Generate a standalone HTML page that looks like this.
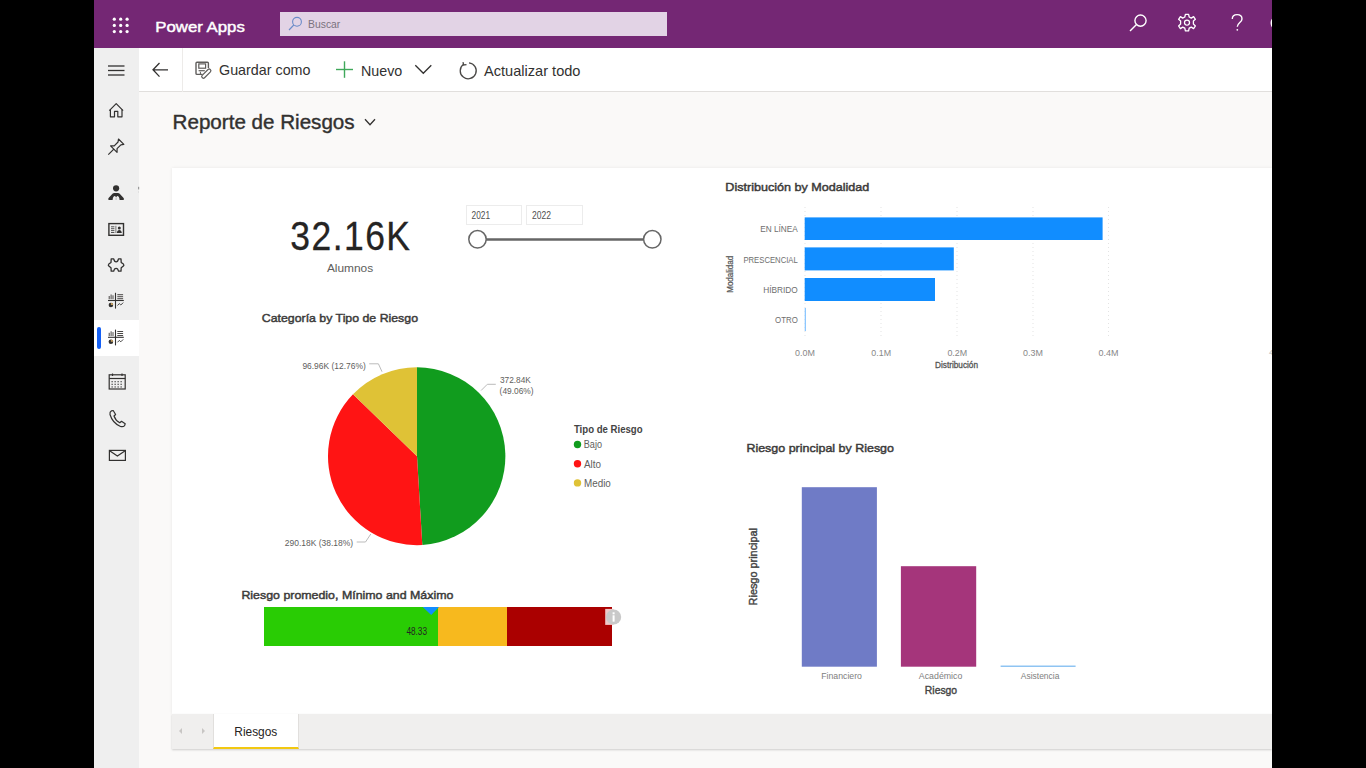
<!DOCTYPE html>
<html><head><meta charset="utf-8">
<title>Reporte de Riesgos</title>
<style>
*{margin:0;padding:0;box-sizing:border-box}
html,body{width:1366px;height:768px;overflow:hidden;background:#000}
body{position:relative;font-family:"Liberation Sans",sans-serif}
.blk{position:absolute}
#app{left:94px;top:0;width:1178px;height:768px;background:#faf9f8;overflow:hidden}
#topbar{left:94px;top:0;width:1178px;height:48px;background:#742774}
#search{left:280px;top:11.5px;width:387px;height:24.5px;background:#e2d3e5}
#toolbar{left:139px;top:48px;width:1133px;height:44px;background:#fff;border-bottom:1px solid #e1dfdd}
#rail{left:94px;top:48px;width:45px;height:720px;background:#efefef}
#railsel{left:94px;top:319.5px;width:45px;height:36px;background:#fff}
#railind{left:97px;top:327px;width:4px;height:21.5px;background:#1460f5;border-radius:2px}
#canvas{left:172px;top:168px;width:1100px;height:546px;background:#fff;box-shadow:0 0 3px rgba(0,0,0,.08)}
#tabs{left:172px;top:714px;width:1100px;height:35px;background:#f0efee;box-shadow:0 1px 2px rgba(0,0,0,.18)}
#tab{left:213px;top:714px;width:86px;height:35px;background:#fff;border-bottom:2.5px solid #f2c811;border-left:1px solid #e1dfdd;border-right:1px solid #e1dfdd}
svg{position:absolute;left:0;top:0}
text{font-family:"Liberation Sans",sans-serif}
</style></head><body>
<div class="blk" id="app"></div>
<div class="blk" id="topbar"></div>
<div class="blk" id="search"></div>
<div class="blk" id="rail"></div>
<div class="blk" id="railsel"></div>
<div class="blk" id="railind"></div>
<div class="blk" id="toolbar"></div>
<div class="blk" id="canvas"></div>
<div class="blk" id="tabs"></div>
<div class="blk" id="tab"></div>
<svg width="1366" height="768" viewBox="0 0 1366 768">
  <!-- ===== TOP BAR ===== -->
  <g fill="#fff">
    <circle cx="114.3" cy="19.2" r="1.6"/><circle cx="120.7" cy="19.2" r="1.6"/><circle cx="127.1" cy="19.2" r="1.6"/>
    <circle cx="114.3" cy="25.4" r="1.6"/><circle cx="120.7" cy="25.4" r="1.6"/><circle cx="127.1" cy="25.4" r="1.6"/>
    <circle cx="114.3" cy="31.6" r="1.6"/><circle cx="120.7" cy="31.6" r="1.6"/><circle cx="127.1" cy="31.6" r="1.6"/>
  </g>
  <text x="155.3" y="31.9" font-size="15.3" fill="#fff" stroke="#fff" stroke-width="0.45" textLength="89.5" lengthAdjust="spacingAndGlyphs">Power Apps</text>
  <g stroke="#6a8bc8" stroke-width="1.1" fill="none">
    <circle cx="297" cy="21.8" r="4.4"/><line x1="293.8" y1="25" x2="289" y2="30"/>
  </g>
  <text x="308" y="27.9" font-size="11.6" fill="#7a727e" textLength="32.3" lengthAdjust="spacingAndGlyphs">Buscar</text>
  <!-- right icons -->
  <g stroke="#fff" stroke-width="1.4" fill="none">
    <circle cx="1140.5" cy="20.6" r="5.6"/><line x1="1136.5" y1="24.6" x2="1130" y2="31"/>
  </g>
  <g transform="translate(1187,22.6)" stroke="#fff" stroke-width="1.3" fill="none">
    <path d="M-1.6,-8.2 L1.6,-8.2 L2.2,-5.6 L4.3,-4.5 L6.6,-6 L8.4,-3.3 L6.4,-1.5 L6.4,1.5 L8.4,3.3 L6.6,6 L4.3,4.5 L2.2,5.6 L1.6,8.2 L-1.6,8.2 L-2.2,5.6 L-4.3,4.5 L-6.6,6 L-8.4,3.3 L-6.4,1.5 L-6.4,-1.5 L-8.4,-3.3 L-6.6,-6 L-4.3,-4.5 L-2.2,-5.6 Z" stroke-linejoin="round"/>
    <circle cx="0" cy="0" r="2.5"/>
  </g>
  <g stroke="#fff" stroke-width="1.4" fill="none">
    <path d="M1232.3,19 C1232.3,15.6 1234.6,14.6 1237.1,14.6 C1240,14.6 1242,16.4 1242,19 C1242,22.3 1237.3,23 1237.3,26.8"/>
  </g>
  <circle cx="1237.3" cy="29.8" r="0.9" fill="#fff"/>
  <circle cx="1277.8" cy="23" r="6.5" stroke="#fff" stroke-width="1.5" fill="none"/>

  <!-- ===== TOOLBAR ===== -->
  <line x1="182.5" y1="48" x2="182.5" y2="92" stroke="#edebe9" stroke-width="1"/>
  <g stroke="#323130" stroke-width="1.3" fill="none">
    <line x1="108" y1="66" x2="124.5" y2="66"/><line x1="108" y1="70.5" x2="124.5" y2="70.5"/><line x1="108" y1="75" x2="124.5" y2="75"/>
    <path d="M159.5,63 L153,69.8 L159.5,76.6 M153,69.8 L168,69.8"/>
  </g>
  <!-- save as icon -->
  <g stroke="#5f5d5b" stroke-width="1.4" fill="none">
    <path d="M202.5,74.4 L197,74.4 Q196,74.4 196,73.4 L196,63.2 Q196,62.2 197,62.2 L207.4,62.2 Q208.4,62.2 208.4,63.2 L208.4,68"/>
    <rect x="198.8" y="63.9" width="6.8" height="4.3" stroke-width="1.2"/>
    <path d="M198.6,70.7 L204.8,70.7" stroke-width="1.2"/>
    <path d="M200.4,71.8 L200.4,74" stroke-width="1"/>
  </g>
  <g transform="translate(206.4,73.5) rotate(-45)">
    <rect x="-5.8" y="-1.7" width="11.3" height="3.4" rx="1.5" fill="#fff" stroke="#5f5d5b" stroke-width="1.2"/>
  </g>
  <text x="219" y="75.3" font-size="14.6" fill="#323130" textLength="91.5" lengthAdjust="spacingAndGlyphs">Guardar como</text>
  <g stroke="#3fa85a" stroke-width="1.4">
    <line x1="336" y1="69.5" x2="353" y2="69.5"/><line x1="344.5" y1="61.3" x2="344.5" y2="77.8"/>
  </g>
  <text x="361" y="75.5" font-size="15.1" fill="#323130" textLength="41.3" lengthAdjust="spacingAndGlyphs">Nuevo</text>
  <path d="M415.3,65.3 L423.3,73.3 L431.3,65.3" stroke="#323130" stroke-width="1.3" fill="none"/>
  <g stroke="#4a4846" stroke-width="1.3" fill="none">
    <path d="M463.5,64.3 A8,8 0 1 0 469,62.8"/>
    <path d="M463,62.2 L463.6,65 L466.5,64.6"/>
  </g>
  <text x="484" y="76" font-size="14.6" fill="#323130" textLength="96.5" lengthAdjust="spacingAndGlyphs">Actualizar todo</text>

  <!-- ===== RAIL ICONS ===== -->
  <g stroke="#323130" stroke-width="1.2" fill="none" stroke-linejoin="round">
    <!-- home -->
    <path d="M109.3,110.6 L116.2,103.7 L123.1,110.6"/>
    <path d="M110.4,109.4 L110.4,116.8 L114.5,116.8 L114.5,111.4 L117.8,111.4 L117.8,116.8 L122,116.8 L122,109.4"/>
    <!-- pin -->
    <g transform="translate(114.8,148.1) rotate(45)">
      <path d="M-3.8,-9 L3.8,-9 L2,-6.6 L2,-1.2 L4.6,1.4 L-4.6,1.4 L-2,-1.2 L-2,-6.6 Z"/>
      <path d="M0,1.4 L0,9.2"/>
    </g>
  </g>
  <!-- id card -->
  <rect x="108.9" y="223.6" width="14.6" height="11.7" stroke="#323130" stroke-width="1.4" fill="none"/>
  <!-- person -->
  <circle cx="116.1" cy="188.3" r="3.1" fill="#323130"/>
  <path d="M108.2,199.5 Q108,198.7 108.8,197.8 L112.5,193.7 Q113.2,192.9 114.3,192.9 L117.9,192.9 Q119,192.9 119.7,193.7 L123.4,197.8 Q124.2,198.7 124,199.5 Q123.8,199.9 123,199.9 L119.6,199.9 Q119.3,196.3 117.2,196.1 L116.1,197.3 L115,196.1 Q112.9,196.3 112.6,199.9 L109.2,199.9 Q108.4,199.9 108.2,199.5 Z" fill="#323130"/>
  <path d="M116.1,197.6 L116.1,199.9" stroke="#b0b0b0" stroke-width="0.9"/>
  <g fill="#555">
    <rect x="111" y="226.3" width="3.4" height="1"/><rect x="111" y="228.2" width="3.4" height="1"/><rect x="111" y="230.1" width="3.4" height="1"/><rect x="111" y="232" width="3.4" height="1"/>
    <rect x="115.5" y="225.8" width="0.8" height="7.2"/>
  </g>
  <g fill="#323130">
    <circle cx="119.3" cy="227.9" r="1.5"/><path d="M116.8,232.9 Q117.2,229.9 119.3,229.9 Q121.4,229.9 121.8,232.9 Z"/>
  </g>
  <!-- puzzle -->
  <path d="M111.2,258.9 L113.7,258.9 Q114.3,261.9 116.1,261.9 Q117.9,261.9 118.5,258.9 L121,258.9 L121.2,262.4 L123.4,264.1 Q124.4,265.1 123.4,266.1 L121.2,267.8 L121,271.2 L118.5,271.2 Q117.9,268.3 116.1,268.3 Q114.3,268.3 113.7,271.2 L111.2,271.2 L111,267.8 L108.8,266.1 Q107.8,265.1 108.8,264.1 L111,262.4 Z" stroke="#323130" stroke-width="1.3" fill="none" stroke-linejoin="round"/>
  <!-- dashboards x2 -->
  <g stroke="#323130" stroke-width="1.1" fill="none">
    <line x1="115.5" y1="292.8" x2="115.5" y2="308.6"/>
    <line x1="108" y1="300.5" x2="123.8" y2="300.5"/>
    <path d="M117.5,305.5 L119.3,303.6 L120.8,305.0 L123.2,302.6" stroke-width="0.9"/>
  </g>
  <g fill="#4a4846">
    <rect x="108.7" y="296.0" width="1" height="3.2"/><rect x="110.6" y="294.5" width="1" height="4.7"/><rect x="112.5" y="295.3" width="1" height="3.9"/>
    <rect x="117.3" y="294.2" width="5.8" height="1"/><rect x="117.3" y="296.2" width="5.8" height="1"/><rect x="117.3" y="298.2" width="5.8" height="1"/>
  </g>
  <circle cx="110.9" cy="305.0" r="2.3" fill="#323130"/>
  <path d="M110.9,305.0 L110.9,302.7 A2.3,2.3 0 0 1 113.2,305.0 Z" fill="#c8a060"/>
  <g stroke="#323130" stroke-width="1.1" fill="none">
    <line x1="115.5" y1="329.6" x2="115.5" y2="345.4"/>
    <line x1="108" y1="337.3" x2="123.8" y2="337.3"/>
    <path d="M117.5,342.3 L119.3,340.4 L120.8,341.8 L123.2,339.4" stroke-width="0.9"/>
  </g>
  <g fill="#4a4846">
    <rect x="108.7" y="332.8" width="1" height="3.2"/><rect x="110.6" y="331.3" width="1" height="4.7"/><rect x="112.5" y="332.1" width="1" height="3.9"/>
    <rect x="117.3" y="331.0" width="5.8" height="1"/><rect x="117.3" y="333.0" width="5.8" height="1"/><rect x="117.3" y="335.0" width="5.8" height="1"/>
  </g>
  <circle cx="110.9" cy="341.8" r="2.3" fill="#323130"/>
  <path d="M110.9,341.8 L110.9,339.5 A2.3,2.3 0 0 1 113.2,341.8 Z" fill="#c8a060"/>
  <!-- calendar -->
  <g stroke="#323130" stroke-width="1.2" fill="none">
    <rect x="109.2" y="374.8" width="16" height="14.2"/>
    <line x1="109.2" y1="378.5" x2="125.2" y2="378.5"/>
    <line x1="112.5" y1="373.5" x2="112.5" y2="376"/><line x1="122" y1="373.5" x2="122" y2="376"/>
  </g>
  <g fill="#555">
    <rect x="111.5" y="381" width="1.3" height="1.3"/><rect x="114.5" y="381" width="1.3" height="1.3"/><rect x="117.5" y="381" width="1.3" height="1.3"/><rect x="120.5" y="381" width="1.3" height="1.3"/>
    <rect x="111.5" y="383.7" width="1.3" height="1.3"/><rect x="114.5" y="383.7" width="1.3" height="1.3"/><rect x="117.5" y="383.7" width="1.3" height="1.3"/><rect x="120.5" y="383.7" width="1.3" height="1.3"/>
    <rect x="111.5" y="386.3" width="1.3" height="1.3"/><rect x="114.5" y="386.3" width="1.3" height="1.3"/><rect x="117.5" y="386.3" width="1.3" height="1.3"/><rect x="120.5" y="386.3" width="1.3" height="1.3"/>
  </g>
  <!-- phone -->
  <path d="M111.5,410.8 L113.2,410.5 L115.6,414.5 L114,416 Q115.5,420.5 119.8,422.8 L121.5,421.3 L125.2,423.8 L124.6,425.6 Q123.2,427.2 120.5,426.5 Q112.5,423 110,414.5 Q109.5,412 111.5,410.8 Z" stroke="#323130" stroke-width="1.2" fill="none" stroke-linejoin="round"/>
  <!-- mail -->
  <g stroke="#323130" stroke-width="1.2" fill="none">
    <rect x="109.4" y="450.4" width="16" height="10"/>
    <path d="M109.6,450.8 L117.4,456 L125.2,450.8"/>
  </g>

  <rect x="138" y="186.8" width="1.2" height="2.6" fill="#9a9a9a"/>
  <rect x="138.2" y="191.5" width="0.8" height="1" fill="#ccc"/>

  <!-- ===== TITLE ===== -->
  <text x="172.6" y="129" font-size="20.3" fill="#323130" stroke="#323130" stroke-width="0.4" textLength="182" lengthAdjust="spacingAndGlyphs">Reporte de Riesgos</text>
  <path d="M365,119.3 L370,124.8 L375,119.3" stroke="#323130" stroke-width="1.3" fill="none"/>

  <!-- ===== KPI CARD ===== -->
  <g transform="translate(290.3,249.8) scale(0.86,1)"><text x="0" y="0" font-size="41.3" fill="#252423" stroke="#252423" stroke-width="0.3" textLength="139.2" lengthAdjust="spacing">32.16K</text></g>
  <text x="326.9" y="272" font-size="11.3" fill="#605e5c" textLength="46.3" lengthAdjust="spacingAndGlyphs">Alumnos</text>

  <!-- ===== SLICER ===== -->
  <rect x="466.5" y="205.5" width="55" height="19" fill="#fff" stroke="#ececec" stroke-width="1"/>
  <rect x="526.5" y="205.5" width="56" height="19" fill="#fff" stroke="#ececec" stroke-width="1"/>
  <text x="471.6" y="218.8" font-size="10.5" fill="#505050" textLength="18.5" lengthAdjust="spacingAndGlyphs">2021</text>
  <text x="532" y="218.8" font-size="10.5" fill="#505050" textLength="19" lengthAdjust="spacingAndGlyphs">2022</text>
  <line x1="486" y1="239.5" x2="643" y2="239.5" stroke="#666" stroke-width="2.6"/>
  <circle cx="477.5" cy="239.3" r="8.7" fill="#fff" stroke="#666" stroke-width="1.5"/>
  <circle cx="652.3" cy="239.3" r="8.7" fill="#fff" stroke="#666" stroke-width="1.5"/>

  <!-- ===== PIE ===== -->
  <text x="261.8" y="322.4" font-size="11.7" fill="#3b3a39" stroke="#3b3a39" stroke-width="0.45" textLength="156.2" lengthAdjust="spacingAndGlyphs">Categoría by Tipo de Riesgo</text>
  <path id="pg" d="M417,456.2 L417,367.2 A89,89 0 0 1 422.3,545 Z" fill="#119c1e"/>
  <path d="M417,456.2 L422.3,545 A89,89 0 0 1 353,394.3 Z" fill="#ff1414"/>
  <path d="M417,456.2 L353,394.3 A89,89 0 0 1 417,367.2 Z" fill="#dfc236"/>
  <g stroke="#bbb" stroke-width="1" fill="none">
    <path d="M369.2,363.8 L378.4,363.8 L382,371.7"/>
    <path d="M495.8,384.3 L487.3,384.3 L481.1,390.5"/>
    <path d="M356.7,542 L365.5,542 L370.8,534"/>
  </g>
  <g fill="#605e5c" font-size="9.6">
    <text x="302.4" y="368.6" textLength="63.3" lengthAdjust="spacingAndGlyphs">96.96K (12.76%)</text>
    <text x="499.9" y="382.6" textLength="31" lengthAdjust="spacingAndGlyphs">372.84K</text>
    <text x="499.6" y="394.3" textLength="33.9" lengthAdjust="spacingAndGlyphs">(49.06%)</text>
    <text x="284.8" y="545.9" textLength="68.2" lengthAdjust="spacingAndGlyphs">290.18K (38.18%)</text>
  </g>
  <text x="573.9" y="432.5" font-size="10" font-weight="bold" fill="#444" textLength="68.7" lengthAdjust="spacingAndGlyphs">Tipo de Riesgo</text>
  <circle cx="577.5" cy="444.5" r="3.7" fill="#119c1e"/>
  <circle cx="577.5" cy="463.8" r="3.7" fill="#ff1414"/>
  <circle cx="577.5" cy="482.9" r="3.7" fill="#dfc236"/>
  <g fill="#605e5c" font-size="10">
    <text x="583.8" y="448.3" textLength="18.2" lengthAdjust="spacingAndGlyphs">Bajo</text>
    <text x="584" y="467.6" textLength="17" lengthAdjust="spacingAndGlyphs">Alto</text>
    <text x="584" y="486.9" textLength="26.8" lengthAdjust="spacingAndGlyphs">Medio</text>
  </g>

  <!-- ===== GAUGE ===== -->
  <text x="241.4" y="599.3" font-size="11.7" fill="#3b3a39" stroke="#3b3a39" stroke-width="0.45" textLength="212" lengthAdjust="spacingAndGlyphs">Riesgo promedio, Mínimo and Máximo</text>
  <rect x="264" y="607" width="174" height="39" fill="#29cc04"/>
  <rect x="438" y="607" width="69" height="39" fill="#f7b91e"/>
  <rect x="507" y="607" width="105" height="39" fill="#aa0000"/>
  <path d="M422.7,607 L439,607 L431.2,615 Z" fill="#118dff"/>
  <text x="406.4" y="634.8" font-size="10" fill="#252423" textLength="20.6" lengthAdjust="spacingAndGlyphs">48.33</text>
  <rect x="605.2" y="608.9" width="8.4" height="16" fill="#f0c8c8"/>
  <circle cx="613.6" cy="617" r="7.6" fill="#c9c9c9"/>
  <rect x="612.6" y="612.3" width="2" height="2" fill="#fff"/>
  <rect x="612.6" y="615.3" width="2" height="6.4" fill="#fff"/>

  <!-- ===== BAR CHART 1 ===== -->
  <text x="725.3" y="191.4" font-size="11.7" fill="#3b3a39" stroke="#3b3a39" stroke-width="0.45" textLength="144" lengthAdjust="spacingAndGlyphs">Distribución by Modalidad</text>
  <g stroke="#e3e3e3" stroke-width="1" stroke-dasharray="1,3">
    <line x1="805" y1="207" x2="805" y2="338"/>
    <line x1="881" y1="207" x2="881" y2="338"/>
    <line x1="957" y1="207" x2="957" y2="338"/>
    <line x1="1033" y1="207" x2="1033" y2="338"/>
    <line x1="1108.5" y1="207" x2="1108.5" y2="338"/>
  </g>
  <g fill="#118dff">
    <rect x="804.7" y="217.4" width="297.9" height="22.6"/>
    <rect x="804.7" y="247.4" width="149.1" height="23"/>
    <rect x="804.7" y="278" width="130.3" height="23"/>
  </g>
  <rect x="804.7" y="308" width="1.3" height="23" fill="#8cc7ff"/>
  <g fill="#6e6e6e" font-size="8.8" text-anchor="end">
    <text x="797.8" y="232.3" textLength="37.5" lengthAdjust="spacingAndGlyphs">EN LÍNEA</text>
    <text x="797.8" y="262.8" textLength="54.4" lengthAdjust="spacingAndGlyphs">PRESCENCIAL</text>
    <text x="797.8" y="293.3" textLength="34.6" lengthAdjust="spacingAndGlyphs">HÍBRIDO</text>
    <text x="797.8" y="323.4" textLength="22.8" lengthAdjust="spacingAndGlyphs">OTRO</text>
  </g>
  <text transform="translate(732.7,274.3) rotate(-90)" x="0" y="0" font-size="8.4" fill="#555" stroke="#555" stroke-width="0.25" text-anchor="middle" textLength="37" lengthAdjust="spacingAndGlyphs">Modalidad</text>
  <g fill="#888" font-size="9" text-anchor="middle">
    <text x="805" y="355.8" textLength="19.8" lengthAdjust="spacingAndGlyphs">0.0M</text>
    <text x="881.2" y="355.8" textLength="19.7" lengthAdjust="spacingAndGlyphs">0.1M</text>
    <text x="957.3" y="355.8" textLength="19.8" lengthAdjust="spacingAndGlyphs">0.2M</text>
    <text x="1033" y="355.8" textLength="19.8" lengthAdjust="spacingAndGlyphs">0.3M</text>
    <text x="1108.5" y="355.8" textLength="20" lengthAdjust="spacingAndGlyphs">0.4M</text>
  </g>
  <text x="956.5" y="368.1" font-size="8.6" fill="#555" stroke="#555" stroke-width="0.3" text-anchor="middle" textLength="43" lengthAdjust="spacingAndGlyphs">Distribución</text>

  <!-- ===== BAR CHART 2 ===== -->
  <text x="746.4" y="452.3" font-size="11.7" fill="#3b3a39" stroke="#3b3a39" stroke-width="0.45" textLength="147.6" lengthAdjust="spacingAndGlyphs">Riesgo principal by Riesgo</text>
  <rect x="801.8" y="487.2" width="75.1" height="179.5" fill="#6f7bc6"/>
  <rect x="900.9" y="566.2" width="75.3" height="100.5" fill="#a5357b"/>
  <rect x="1000.6" y="665.6" width="75" height="1.2" fill="#74b6ef"/>
  <g fill="#808080" font-size="9.4" text-anchor="middle">
    <text x="841.6" y="678.8" textLength="40.8" lengthAdjust="spacingAndGlyphs">Financiero</text>
    <text x="940.6" y="678.8" textLength="43.5" lengthAdjust="spacingAndGlyphs">Académico</text>
    <text x="1040.1" y="678.8" textLength="38.6" lengthAdjust="spacingAndGlyphs">Asistencia</text>
  </g>
  <text x="941" y="693.6" font-size="11.2" fill="#444" stroke="#444" stroke-width="0.4" text-anchor="middle" textLength="32.3" lengthAdjust="spacingAndGlyphs">Riesgo</text>
  <text transform="translate(757,566.7) rotate(-90)" x="0" y="0" font-size="11" fill="#444" stroke="#444" stroke-width="0.4" text-anchor="middle" textLength="77.4" lengthAdjust="spacingAndGlyphs">Riesgo principal</text>
  <text x="1269" y="355" font-size="8" fill="#bbb">4</text>

  <!-- ===== TABS ===== -->
  <path d="M182,728 L179,731 L182,734 Z" fill="#c8c6c4"/>
  <path d="M202,728 L205,731 L202,734 Z" fill="#c8c6c4"/>
  <text x="234.3" y="736" font-size="12.2" fill="#252423" textLength="43" lengthAdjust="spacingAndGlyphs">Riesgos</text>
  <rect x="1272" y="0" width="94" height="768" fill="#000"/>
  <rect x="0" y="0" width="94" height="768" fill="#000"/>
</svg>
</body></html>
